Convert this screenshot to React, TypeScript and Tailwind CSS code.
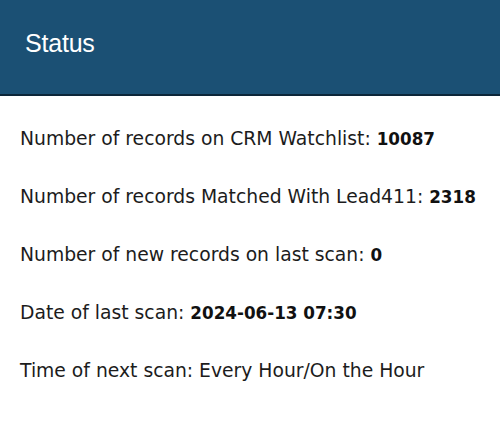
export default function App() {
  const rows: [string, string | null][] = [
    ['Number of records on CRM Watchlist: ', '10087'],
    ['Number of records Matched With Lead411: ', '2318'],
    ['Number of new records on last scan: ', '0'],
    ['Date of last scan: ', '2024-06-13 07:30'],
    ['Time of next scan: Every Hour/On the Hour', null],
  ];

  return (
    <div className="w-[500px] h-[424px] bg-white">
      <div className="h-[96px] bg-[#1b5074] border-b-2 border-[#0c2639] flex items-center pl-[25px] pb-[6px]">
        <h1 className="text-white text-[25px] font-['Liberation_Sans',Arial,sans-serif] tracking-[-0.2px]">Status</h1>
      </div>
      <div className="pl-[20px] pt-[30px] flex flex-col gap-[32px] text-[18.75px] leading-[25px] text-[#1c1c1c] font-['DejaVu_Sans',sans-serif]">
        {rows.map(([label, value]) => (
          <p key={label}>
            {label}
            {value && <span className="text-[16.75px] font-bold text-[#111]">{value}</span>}
          </p>
        ))}
      </div>
    </div>
  );
}
